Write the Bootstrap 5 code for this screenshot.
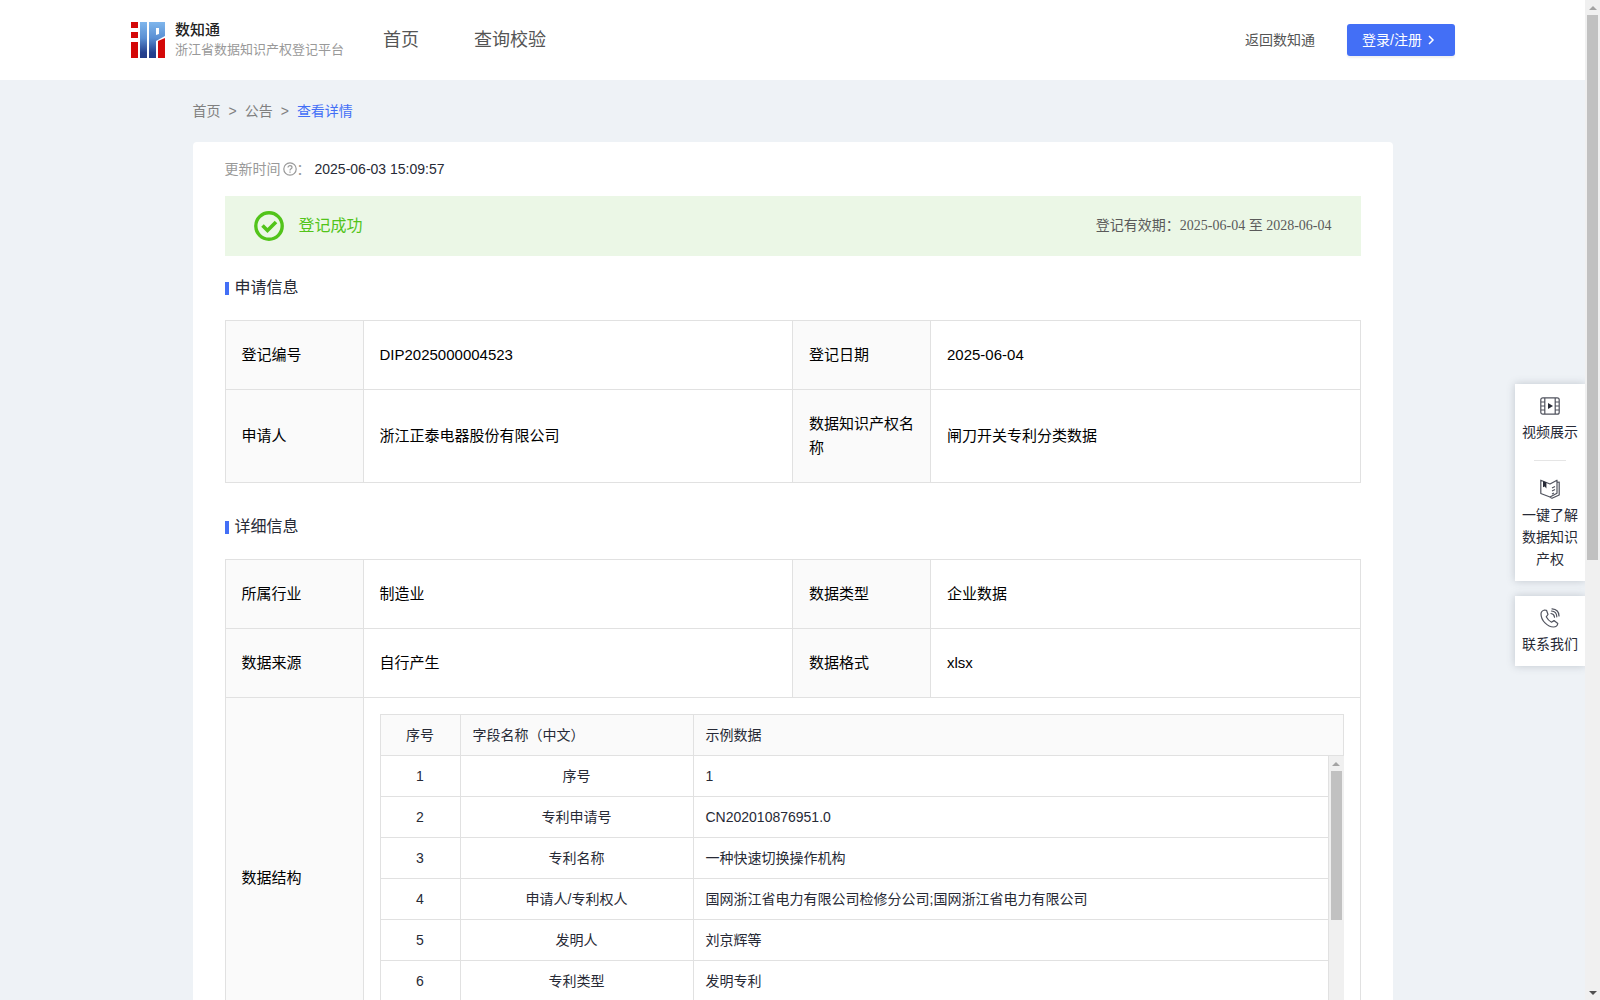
<!DOCTYPE html>
<html lang="zh-CN">
<head>
<meta charset="utf-8">
<meta name="viewport" content="width=device-width, initial-scale=1">
<title>数知通 - 浙江省数据知识产权登记平台</title>
<link href="https://cdn.jsdelivr.net/npm/bootstrap@5.3.0/dist/css/bootstrap.min.css" rel="stylesheet">
<style>
  :root { --brand: #436ff6; --line: #e1e1e1; --ink: #272a36; --shade: #fafafa; }
  body { font-family: "Liberation Sans", "Noto Sans CJK SC", sans-serif; font-size: 14px; line-height: 22px; color: var(--ink); background: #eef2f6; }
  a { text-decoration: none; color: inherit; }
  .viewer { height: 100vh; overflow: hidden; }
  .page-pane { min-width: 0; }
  .site-header { height: 80px; padding: 0 130px 0 131px; color: #555; }
  .brand-name { font-size: 15px; line-height: 20px; color: #222; font-weight: 500; }
  .brand-sub { font-size: 13px; line-height: 20px; color: #999; }
  .brand-link { gap: 10px; width: 213px; margin-right: 39px; white-space: nowrap; }
  .main-nav { gap: 55px; font-size: 18px; }
  .login-btn { --bs-btn-color: #fff; --bs-btn-bg: var(--brand); --bs-btn-hover-bg: #325de0; --bs-btn-hover-color: #fff; --bs-btn-border-radius: 3px; --bs-btn-font-size: 14px; --bs-btn-line-height: 20px; width: 108px; height: 32px; padding: 0 15px; border: 0; box-shadow: 0 2px 2px rgba(0,0,0,.06); white-space: nowrap; }
  .main-wrap { max-width: 1200px; }
  .crumbs { height: 62px; color: #808080; }
  .crumb-now { color: var(--brand); }
  .detail-card { padding: 16px 32px 32px; border-radius: 4px; }
  .muted { color: #999; }
  .help-icon { margin-left: 2px; }
  .ok-banner { height: 60px; padding: 0 29px; background: #ebf7e6; margin-top: 16px; }
  .ok-text { color: #52c41a; font-size: 16px; margin-left: 15px; }
  .valid-text { font-family: "Liberation Serif", "Noto Sans CJK SC", serif; color: #5a5a5a; }
  .section-title { font-size: 16px; line-height: 24px; margin: 20px 0 20px; gap: 6px; font-weight: 400; }
  .section-title::before { content: ""; width: 4px; height: 13px; background: var(--brand); }
  .info-table { table-layout: fixed; width: 100%; font-size: 15px; line-height: 24px; color: #000; margin: 0 0 32px; }
  .info-table th, .info-table td { border: 1px solid var(--line); }
  .info-table > tbody > tr > th, .info-table > tbody > tr > td { padding: 22px 16px; vertical-align: middle; }
  .info-table th { font-weight: 400; background: var(--shade); }
  .info-table > tbody > tr > td.nest-cell { padding: 16px; }
  .c-label { width: 138px; }
  .field-table { table-layout: fixed; width: 100%; font-size: 14px; line-height: 20px; color: var(--ink); }
  .field-table th, .field-table td { padding: 10px 12px; }
  .field-table tbody td { text-align: center; }
  .field-table tbody td:last-child { text-align: left; }
  .field-table thead th:first-child { text-align: center; }
  .field-body { min-height: 287px; margin-top: -1px; }
  .c-no { width: 80px; }
  .c-name { width: 233px; }
  .rail { width: 15px; flex: none; background: #f0f0f0; }
  .rail-up, .rail-down { height: 15px; display: flex; align-items: center; justify-content: center; }
  .rail-up::before { content: ""; border: 4px solid transparent; border-top: 0; border-bottom-color: #a3a3a3; }
  .rail-down::before { content: ""; border: 4px solid transparent; border-bottom: 0; border-top-color: #505050; }
  .rail-thumb { width: 11px; margin: 0 auto; background: #c1c1c1; }
  .page-rail .rail-thumb { height: 54.5%; }
  .field-rail { margin-top: 1px; }
  .field-rail .rail-thumb { height: 52%; }
  .side-tools { top: 384px; right: 0; width: 70px; gap: 15px; }
  .tool-box { box-shadow: 0 0 8px rgba(60,70,90,.25); padding: 12px 7px 11px; text-align: center; }
  .tool-box a { gap: 5px; }
  .tool-box hr { width: 32px; margin: 17px auto 18px; border-color: #999; }
</style>
<script src="https://cdn.jsdelivr.net/npm/bootstrap@5.3.0/dist/js/bootstrap.bundle.min.js"></script>
</head>
<body>
<div class="viewer d-flex">
  <div class="page-pane flex-grow-1 position-relative overflow-hidden">
    <header class="site-header bg-white d-flex align-items-center">
      <a href="#" class="brand-link d-flex align-items-center">
        <svg width="34" height="36" viewBox="0 0 34 36" aria-hidden="true">
          <defs><linearGradient id="blueFade" x1="0" y1="0" x2="0" y2="1"><stop offset="0" stop-color="#7fb6ec"/><stop offset=".45" stop-color="#5a8fd3"/><stop offset=".85" stop-color="#25418f"/><stop offset="1" stop-color="#233c88"/></linearGradient></defs>
          <path fill="#d40808" d="M0 0h7v6H0zM0 10h7v6H0zM0 20h7v16H0zM27 19l7-3v20h-7z"/>
          <path fill="url(#blueFade)" fill-rule="evenodd" d="M9 0h7v36H9zM18 0h16v14l-9 5v17h-7zM25 6v7l3-1V6z"/>
        </svg>
        <span class="d-flex flex-column"><span class="brand-name">数知通</span><span class="brand-sub">浙江省数据知识产权登记平台</span></span>
      </a>
      <nav class="main-nav d-flex"><a href="#">首页</a><a href="#">查询校验</a></nav>
      <a href="#" class="ms-auto me-3 pe-3">返回数知通</a>
      <button type="button" class="btn login-btn d-flex align-items-center gap-1">登录/注册
        <svg width="10" height="10" viewBox="0 0 10 10" fill="none" stroke="#fff" stroke-width="1.5" aria-hidden="true"><path d="M3 1l4 4-4 4"/></svg>
      </button>
    </header>

    <main class="main-wrap mx-auto">
      <nav class="crumbs d-flex align-items-center gap-2" aria-label="breadcrumb">
        <a href="#">首页</a><span>&gt;</span><a href="#">公告</a><span>&gt;</span><a href="#" class="crumb-now">查看详情</a>
      </nav>

      <section class="detail-card bg-white">
        <div class="d-flex align-items-center">
          <span class="muted">更新时间</span>
          <svg class="help-icon" width="14" height="14" viewBox="0 0 14 14" fill="none" stroke="#999" stroke-width="1.2" aria-hidden="true"><circle cx="7" cy="7" r="6.2"/><path d="M5 5.6c0-2.700 4-2.500 4-.2C9 6.800 7 6.800 7 8.400M7 9.500v1.200"/></svg>
          <span class="muted me-1">：</span><span>2025-06-03 15:09:57</span>
        </div>

        <div class="ok-banner d-flex align-items-center">
          <svg width="30" height="30" viewBox="0 0 30 30" fill="none" stroke="#52c41a" aria-hidden="true"><circle cx="15" cy="15" r="13.200" stroke-width="3.400"/><path d="M8.500 14.500l5 5 8.500-8.500" stroke-width="3.600"/></svg>
          <span class="ok-text">登记成功</span>
          <span class="valid-text ms-auto">登记有效期：2025-06-04 至 2028-06-04</span>
        </div>

        <h2 class="section-title d-flex align-items-center">申请信息</h2>
        <table class="info-table">
          <colgroup><col class="c-label"><col><col class="c-label"><col></colgroup>
          <tbody>
            <tr><th scope="row">登记编号</th><td>DIP2025000004523</td><th scope="row">登记日期</th><td>2025-06-04</td></tr>
            <tr><th scope="row">申请人</th><td>浙江正泰电器股份有限公司</td><th scope="row">数据知识产权名称</th><td>闸刀开关专利分类数据</td></tr>
          </tbody>
        </table>

        <h2 class="section-title d-flex align-items-center">详细信息</h2>
        <table class="info-table">
          <colgroup><col class="c-label"><col><col class="c-label"><col></colgroup>
          <tbody>
            <tr><th scope="row">所属行业</th><td>制造业</td><th scope="row">数据类型</th><td>企业数据</td></tr>
            <tr><th scope="row">数据来源</th><td>自行产生</td><th scope="row">数据格式</th><td>xlsx</td></tr>
            <tr><th scope="row">数据结构</th>
              <td colspan="3" class="nest-cell">
                <table class="field-table">
                  <colgroup><col class="c-no"><col class="c-name"><col></colgroup>
                  <thead><tr><th scope="col">序号</th><th scope="col">字段名称（中文）</th><th scope="col">示例数据</th></tr></thead>
                </table>
                <div class="field-body d-flex">
                  <div class="flex-grow-1">
                    <table class="field-table">
                      <colgroup><col class="c-no"><col class="c-name"><col></colgroup>
                      <tbody>
                        <tr><td>1</td><td>序号</td><td>1</td></tr>
                        <tr><td>2</td><td>专利申请号</td><td>CN202010876951.0</td></tr>
                        <tr><td>3</td><td>专利名称</td><td>一种快速切换操作机构</td></tr>
                        <tr><td>4</td><td>申请人/专利权人</td><td>国网浙江省电力有限公司检修分公司;国网浙江省电力有限公司</td></tr>
                        <tr><td>5</td><td>发明人</td><td>刘京辉等</td></tr>
                        <tr><td>6</td><td>专利类型</td><td>发明专利</td></tr>
                      </tbody>
                    </table>
                  </div>
                  <div class="rail field-rail d-flex flex-column" aria-hidden="true"><div class="rail-up"></div><div class="rail-thumb"></div></div>
                </div>
              </td></tr>
          </tbody>
        </table>
      </section>
    </main>

    <aside class="side-tools position-absolute d-flex flex-column">
      <div class="tool-box bg-white">
        <a href="#" class="d-flex flex-column align-items-center">
          <svg width="20" height="20" viewBox="0 0 20 20" fill="none" stroke="#50535e" stroke-width="1.200" aria-hidden="true"><rect x=".8" y="1.800" width="18.400" height="16.400" rx="2"/><path d="M4.800 2v16M15.200 2v16M1 6h3.800M1 10h3.800M1 14h3.800M15.200 6H19M15.200 10H19M15.200 14H19"/><path d="M8 7l5 3-5 3z" fill="#272a36" stroke="none"/></svg>
          <span>视频展示</span>
        </a>
        <hr>
        <a href="#" class="d-flex flex-column align-items-center">
          <svg width="20" height="20" viewBox="0 0 20 20" fill="none" stroke="#50535e" stroke-width="1.200" stroke-linejoin="round" aria-hidden="true"><path d="M.8 1.200L10 5l7-3.800v13L10 18 .8 14.500zM17 3.500l2.200-.5v13L12 19.300l-2-1M12 9l3-1.500M12 12l3-1.500M12 15l2-1"/><path d="M3 2l3.400 1.400v6L4.700 7.500 3 8.200z" fill="#272a36" stroke="none"/></svg>
          <span>一键了解数据知识产权</span>
        </a>
      </div>
      <div class="tool-box bg-white">
        <a href="#" class="d-flex flex-column align-items-center">
          <svg width="20" height="20" viewBox="0 0 20 20" fill="none" stroke="#50535e" stroke-width="1.200" stroke-linejoin="round" stroke-linecap="round" aria-hidden="true"><path d="M4.500 2C2.500 2.500 1 4 1 6c0 6.500 6.500 13 12.500 13 2.200 0 4-1.500 4.300-3.500L14 12.500l-2.500 1.700C9 13 7.500 11.200 6.200 8.800L8 6.500 6.500 2.300z"/><path d="M11 5.500c2 .3 3.300 1.600 3.500 3.700M11.500 3c3.200.2 5.200 2.400 5.300 5.800M12 .8c4.300.3 7 3.200 7 7.200"/></svg>
          <span>联系我们</span>
        </a>
      </div>
    </aside>
  </div>
  <div class="rail page-rail d-flex flex-column" aria-hidden="true"><div class="rail-up"></div><div class="rail-thumb"></div><div class="rail-down mt-auto"></div></div>
</div>
</body>
</html>
